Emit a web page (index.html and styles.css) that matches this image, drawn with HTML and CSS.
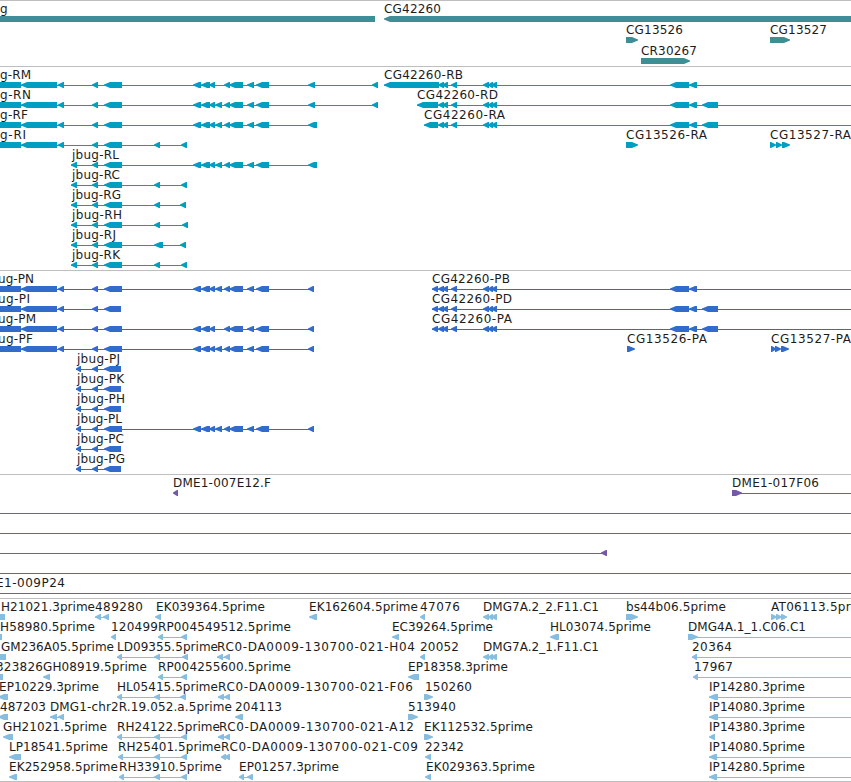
FILE: index.html
```
<!DOCTYPE html>
<html lang="en">
<head>
<meta charset="utf-8">
<title>Genome browser</title>
<link rel="stylesheet" href="styles.css">
</head>
<body>
<main class="browser">
  <section class="track track-gene" id="genes"></section>
  <section class="track track-mrna" id="mrna"></section>
  <section class="track track-cds" id="cds"></section>
  <section class="track track-bac" id="bac"></section>
  <section class="track track-est" id="est"></section>
</main>
<script src="script.js"></script>
</body>
</html>
```
FILE: styles.css
```
body {
  margin: 0;
  background: #fff;
  overflow: hidden;
}

.browser {
  display: flex;
  flex-direction: column;
  width: 851px;
  height: 782px;
  overflow: hidden;
}

.track {
  flex: none;
  box-sizing: border-box;
  padding: 1px 0 2px;
  border-top: 1px solid #bebebe;
}

.track-gene { color: #3f8e96; padding-bottom: 1px; }
.track-mrna { color: #009fc1; }
.track-cds { color: #316ccc; }
.track-bac { color: #7559a9; }
.track-est {
  color: #87bddf;
  padding-bottom: 1px;
  border-bottom: 1px solid #bebebe;
}

.row {
  display: block;
  width: 851px;
  height: 20px;
  overflow: visible;
}

.track-gene .row { height: 21px; }

.label {
  fill: #1c1c1c;
  font: 12px "DejaVu Sans", sans-serif;
  white-space: pre;
}

.feature { fill: currentColor; }

.intron {
  fill: currentColor;
  shape-rendering: crispEdges;
}
```
FILE: script.js
```
// Row: [labels, introns, features].
// label = "x,end,text", intron = "start-end", feature = strand + "start-end" with < or > for strand, = for a plain box.
const END = 851;
const body = "=-9-21 <21-57 <58-64 <92-98 <104-122";
const mid = " <193-201 <201-210 <209-215 <215-222 <224-230 <229-243 <247-254 <256-269";
const midShort = mid.replace(" <215-222", "");
const tri = " <483-489 <488-493 <491-497";
const near = " <438-444 <442-448 <451-457";
const far = " <670-689 <689-697";
const far3 = far + " <702-718";
const head = "<71-77 <92-98 <104-122";
const cdsHead = "<76-81 <92-98 <104-121";

const tracks = {
  genes: [
    ["0,7,g|384,441,CG42260", "", "=-9-375 <384-860"],
    ["626,683,CG13526|770,827,CG13527", "", ">626-638 >770-790"],
    ["641,697,CR30267", "", ">641-690"]
  ],
  mrna: [
    ["0,31,g-RM|384,463,CG42260-RB", "0-378 384-851", body + midShort + " <308-315 <372-378 <384-439" + near + tri + far],
    ["0,31,g-RN|417,498,CG42260-RD", "0-378 417-851", body + mid + " <308-315 <372-378 <417-438" + near + tri + far3],
    ["0,28,g-RF|424,505,CG42260-RA", "0-317 424-851", body + mid + " <308-317 <424-438" + near + tri + far3],
    ["0,26,g-RI|626,707,CG13526-RA|770,851,CG13527-RA", "0-187", body + " <154-160 <181-187 >626-638 >770-776 >776-782 >782-790"],
    ["72,119,jbug-RL", "71-317", head + mid + " <308-317"],
    ["72,120,jbug-RC", "71-187", head + " <154-160 <181-187"],
    ["72,121,jbug-RG", "71-186", head + " <154-160 <180-186"],
    ["72,122,jbug-RH", "71-188", head + " <154-160 <182-188"],
    ["72,116,jbug-RJ", "71-186", head + " <154-163 <180-186"],
    ["72,120,jbug-RK", "71-187", head + " <154-160 <181-187"]
  ],
  cds: [
    ["-2,34,ug-PN|432,510,CG42260-PB", "0-314 432-851", body + mid + " <308-314 <432-438" + near + tri + far],
    ["-2,30,ug-PI|432,512,CG42260-PD", "0-121 432-851", body.replace("122", "121") + " <432-438" + near + tri + far3],
    ["-2,36,ug-PM|432,512,CG42260-PA", "0-314 432-851", body + midShort + " <308-314 <432-438" + near + tri + far3],
    ["-2,33,ug-PF|627,707,CG13526-PA|771,851,CG13527-PA", "0-314", body + mid + " <308-314 >627-635 >771-776 >775-781 >781-789"],
    ["77,120,jbug-PJ", "76-121", cdsHead],
    ["77,124,jbug-PK", "76-121", cdsHead],
    ["77,125,jbug-PH", "76-121", cdsHead],
    ["77,122,jbug-PL", "76-314", cdsHead.replace("121", "122") + mid + " <308-314"],
    ["77,124,jbug-PC", "76-121", cdsHead],
    ["77,125,jbug-PG", "76-121", cdsHead]
  ],
  bac: [
    ["173,271,DME1-007E12.F|732,819,DME1-017F06", "732-851", "<173-178 >732-742"],
    ["", "0-851", ""],
    ["", "0-851", ""],
    ["", "0-607", "<601-607"],
    ["", "0-851", ""],
    ["-4,65,E1-009P24", "0-851", ""]
  ],
  est: [
    ["1,95,H21021.3prime|95,143,489280|156,265,EK039364.5prime|309,418,EK162604.5prime|420,460,47076|483,599,DMG7A.2_2.F11.C1|626,726,bs44b06.5prime|771,874,AT06113.5prime",
      "95-109", "=-9-5 <95-101 <103-109 <155-161 <309-317 <420-425" + tri + " >626-638 >771-777 >776-782 >781-787"],
    ["0,95,H58980.5prime|111,158,120499|158,291,RP004549512.5prime|392,493,EC39264.5prime|550,651,HL03074.5prime|688,806,DMG4A.1_1.C06.C1",
      "158-187 688-851", "=-9-2 <111-116 <158-163 <181-187 <392-399 <550-559 >688-698"],
    ["1,114,GM236A05.5prime|117,218,LD09355.5prime|217,415,RC0-DA0009-130700-021-H04|420,459,20052|483,599,DMG7A.2_1.F11.C1|692,732,20364",
      "117-188 217-230 692-851", "=-9-6 <117-122 <154-160 <182-188 <217-223 <224-230 <420-425" + tri + " <692-697"],
    ["-4,43,323826|43,147,GH08919.5prime|158,291,RP004255600.5prime|408,508,EP18358.3prime|694,733,17967",
      "158-187 693-851", "=-9-3 <43-50 <158-163 <181-187 <408-419 <693-698"],
    ["-1,99,EP10229.3prime|117,218,HL05415.5prime|218,413,RC0-DA0009-130700-021-F06|425,472,150260|709,805,IP14280.3prime",
      "117-186 218-230 709-851", "<-2-8 <117-122 <154-160 <180-186 <218-224 <224-230 >424-433 <709-718"],
    ["0,46,487203|50,232,DMG1-chr2R.19.052.a.5prime|235,282,204113|408,456,513940|709,805,IP14080.3prime",
      "50-64 709-851", "<-2-8 <50-57 <58-64 <235-243 >408-418 <709-718"],
    ["3,107,GH21021.5prime|117,220,RH24122.5prime|219,414,RC0-DA0009-130700-021-A12|424,533,EK112532.5prime|709,805,IP14380.3prime",
      "117-187 218-230", "<3-13 <117-122 <154-160 <181-187 <218-224 <224-230 >424-433 <709-715"],
    ["9,108,LP18541.5prime|118,221,RH25401.5prime|221,418,RC0-DA0009-130700-021-C09|425,464,22342|709,805,IP14080.5prime",
      "118-187 709-851", "<9-21 <118-123 <154-160 <181-187 <221-226 <224-230 <425-431 <709-717"],
    ["9,118,EK252958.5prime|119,222,RH33910.5prime|239,339,EP01257.3prime|426,535,EK029363.5prime|709,805,IP14280.5prime",
      "119-187 239-253 709-851", "<9-17 <119-124 <154-160 <181-187 <239-244 <247-253 <425-431 <709-717"]
  ]
};

const NS = "http://www.w3.org/2000/svg";
function add(parent, tag, attrs) {
  const el = document.createElementNS(NS, tag);
  for (const k in attrs) el.setAttribute(k, attrs[k]);
  parent.appendChild(el);
  return el;
}

function outline(strand, a, b) {
  const top = 14, midY = 17, bottom = 20;
  const h = Math.min(6, b - a - 1);
  if (strand === "=") return `${a},${top} ${b},${top} ${b},${bottom} ${a},${bottom}`;
  if (strand === "<")
    return `${a},${midY - 0.4} ${a + h},${top} ${b},${top} ${b},${bottom} ${a + h},${bottom} ${a},${midY + 0.4}`;
  return `${b},${midY - 0.4} ${b - h},${top} ${a},${top} ${a},${bottom} ${b - h},${bottom} ${b},${midY + 0.4}`;
}

for (const id in tracks) {
  const track = document.getElementById(id);
  for (const [labels, introns, features] of tracks[id]) {
    const svg = add(track, "svg", { class: "row" });
    for (const s of introns.split(" ").filter(Boolean)) {
      const [a, b] = s.split("-").map(Number);
      add(svg, "rect", { class: "intron", x: a, y: 17, width: Math.min(b, END) - a, height: 1 });
    }
    for (const s of features.split(" ").filter(Boolean)) {
      const m = s.match(/^(.)(-?\d+)-(\d+)$/);
      add(svg, "polygon", { class: "feature", points: outline(m[1], +m[2], +m[3]) });
    }
    for (const s of labels.split("|").filter(Boolean)) {
      const [x, end, text] = s.split(",");
      add(svg, "text", { class: "label", x: x, y: 11, textLength: end - x }).textContent = text;
    }
  }
}
```
